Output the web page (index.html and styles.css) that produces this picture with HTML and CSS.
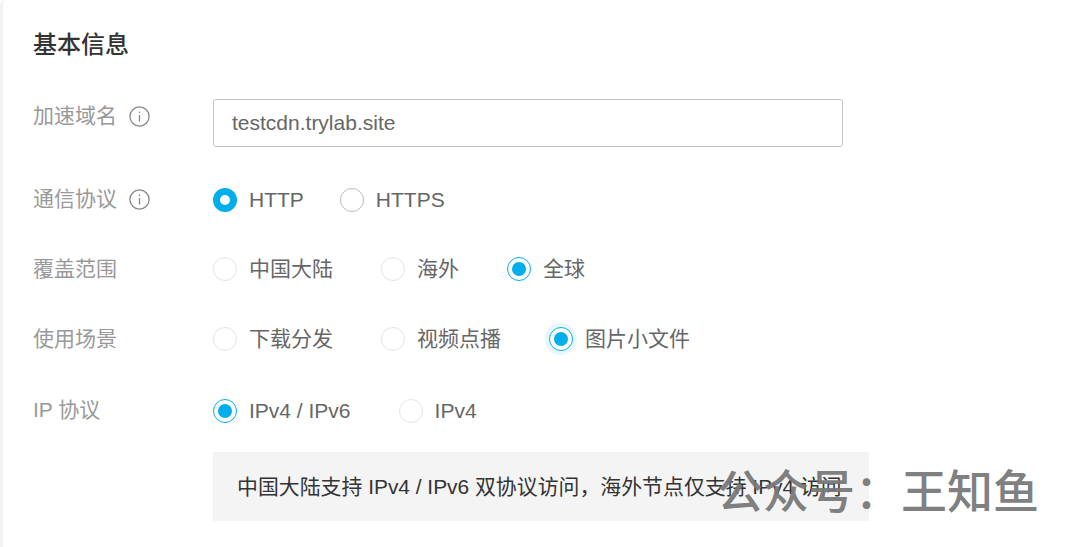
FILE: index.html
```html
<!DOCTYPE html>
<html lang="zh-CN">
<head>
    <meta charset="UTF-8">
    <meta name="viewport" content="width=device-width, initial-scale=1.0">
    <title>基本信息</title>
    <link rel="stylesheet" href="styles.css">
</head>
<body>
    <div class="card">
        <h2 class="title">基本信息</h2>

        <div class="row row-domain">
            <div class="label">加速域名
                <svg class="info" viewBox="0 0 21 21"><circle cx="10.5" cy="10.5" r="9.6"/><path d="M10.5 9v6.5"/><path d="M10.5 5.6v1.6"/></svg>
            </div>
            <input class="text-input" type="text" value="testcdn.trylab.site">
        </div>

        <div class="row row-protocol">
            <div class="label">通信协议
                <svg class="info" viewBox="0 0 21 21"><circle cx="10.5" cy="10.5" r="9.6"/><path d="M10.5 9v6.5"/><path d="M10.5 5.6v1.6"/></svg>
            </div>
            <div class="options">
                <span class="option gap-http"><i class="radio solid"></i>HTTP</span>
                <span class="option"><i class="radio dark"></i>HTTPS</span>
            </div>
        </div>

        <div class="row row-cover">
            <div class="label">覆盖范围</div>
            <div class="options">
                <span class="option gap-four"><i class="radio"></i>中国大陆</span>
                <span class="option gap-two"><i class="radio"></i>海外</span>
                <span class="option"><i class="radio on"></i>全球</span>
            </div>
        </div>

        <div class="row row-usage">
            <div class="label">使用场景</div>
            <div class="options">
                <span class="option gap-four"><i class="radio"></i>下载分发</span>
                <span class="option gap-four"><i class="radio"></i>视频点播</span>
                <span class="option"><i class="radio on focus"></i>图片小文件</span>
            </div>
        </div>

        <div class="row row-ip">
            <div class="label">IP 协议</div>
            <div class="options">
                <span class="option gap-four"><i class="radio on"></i>IPv4 / IPv6</span>
                <span class="option"><i class="radio"></i>IPv4</span>
            </div>
        </div>

        <div class="note">中国大陆支持 IPv4 / IPv6 双协议访问，海外节点仅支持 IPv4 访问</div>
    </div>

    <div class="watermark">公众号：王知鱼</div>
</body>
</html>
```

FILE: styles.css
```css
html, body {
    margin: 0;
    padding: 0;
    height: 547px;
    overflow: hidden;
    background-color: #fff;
}
body {
    font-family: "Liberation Sans", "Noto Sans CJK SC", sans-serif;
    color: #666;
}
.card {
    box-sizing: border-box;
    height: 547px;
    padding: 31px 0 0 30px;
    border-left: 3px solid #f2f2f2;
    border-top-left-radius: 6px;
}
.title {
    margin: 0 0 40px 0;
    font-size: 24px;
    line-height: 28px;
    font-weight: 500;
    color: #333;
}
.row {
    display: flex;
    align-items: center;
}
.label {
    display: flex;
    align-items: center;
    width: 180px;
    flex-shrink: 0;
    font-size: 21px;
    line-height: 34px;
    color: #999;
}
.info {
    width: 21px;
    height: 21px;
    margin-left: 12px;
    fill: none;
    stroke: #888;
    stroke-width: 1.3;
}
.text-input {
    box-sizing: border-box;
    width: 630px;
    height: 48px;
    padding: 0 18px;
    border: 1px solid #c4c4c4;
    border-radius: 3px;
    font-family: inherit;
    font-size: 21px;
    color: #666;
    outline: none;
}
.row-domain {
    align-items: flex-start;
    height: 48px;
}
.row-protocol {
    margin-top: 36px;
}
.row-protocol .label,
.row-ip .label {
    margin-top: -2px;
}
.row-cover {
    margin-top: 35px;
}
.row-usage {
    margin-top: 36px;
}
.row-ip {
    margin-top: 38px;
}
.options {
    display: flex;
    align-items: center;
    font-size: 21px;
    line-height: 34px;
}
.option {
    display: flex;
    align-items: center;
}
.gap-http {
    margin-right: 36px;
}
.gap-four {
    margin-right: 48px;
}
.gap-two {
    margin-right: 48px;
}
.radio {
    position: relative;
    box-sizing: border-box;
    width: 24px;
    height: 24px;
    margin-right: 12px;
    border: 1px solid #e4e4e4;
    border-radius: 50%;
    background-color: #fff;
}
.radio.dark {
    border-color: #bbb;
}
.radio.solid {
    border: 7.5px solid #00aeec;
}
.radio.on {
    border-color: #00aeec;
}
.radio.on::after {
    content: "";
    position: absolute;
    left: 4px;
    top: 4px;
    width: 14px;
    height: 14px;
    border-radius: 50%;
    background-color: #00aeec;
}
.radio.focus {
    box-shadow: 0 0 0 4px #e6f7fd;
}
.note {
    box-sizing: border-box;
    width: 656px;
    height: 69px;
    margin: 24px 0 0 180px;
    padding: 0 24px;
    background-color: #f4f4f4;
    font-size: 20.9px;
    line-height: 69px;
    color: #333;
    white-space: nowrap;
}
.watermark {
    position: absolute;
    left: 717px;
    top: 464px;
    font-size: 46px;
    line-height: 56px;
    font-weight: 500;
    color: rgba(120, 120, 120, 0.95);
    white-space: nowrap;
}
```
